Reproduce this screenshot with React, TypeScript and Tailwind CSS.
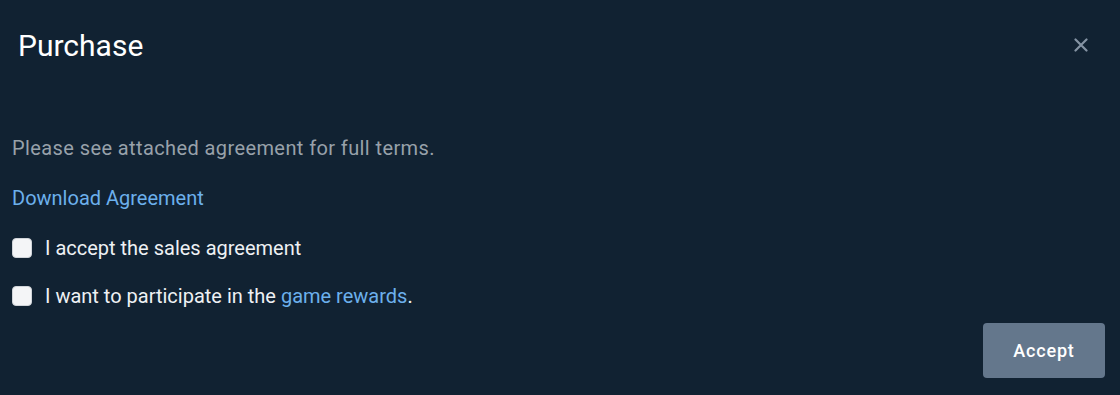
import React from "react";

export default function App() {
  return (
    <div
      className="w-[1120px] h-[395px] bg-[#112232] flex flex-col"
      style={{ fontFamily: "Roboto, 'Noto Sans', sans-serif" }}
    >
      <div className="flex items-start justify-between pl-[18px] pr-[31px] pt-[28px]">
        <h1 className="text-[30px] leading-[36px] text-white font-normal">Purchase</h1>
        <button className="mt-[9px] w-[16px] h-[16px] flex items-center justify-center text-[#8493a3]">
          <svg width="14" height="14" viewBox="0 0 14 14" fill="none">
            <path d="M1.5 1.5L12.5 12.5M12.5 1.5L1.5 12.5" stroke="currentColor" strokeWidth="2.2" strokeLinecap="round" />
          </svg>
        </button>
      </div>
      <div className="pl-[12px] mt-[72px] flex flex-col text-[20px] leading-[24px]">
        <p className="text-[#98a1aa] tracking-[0.4px]">Please see attached agreement for full terms.</p>
        <a className="mt-[26px] text-[#6cb0ec] self-start cursor-pointer">Download Agreement</a>
        <label className="mt-[26px] flex items-center gap-[13px] text-[#eef1f4]">
          <span className="w-[20px] h-[20px] rounded-[4px] bg-[#f4f5f7] border border-[#d0d4d9]" />
          <span>I accept the sales agreement</span>
        </label>
        <label className="mt-[24px] flex items-center gap-[13px] text-[#eef1f4]">
          <span className="w-[20px] h-[20px] rounded-[4px] bg-[#f4f5f7] border border-[#d0d4d9]" />
          <span>
            I want to participate in the <a className="text-[#6cb0ec] cursor-pointer">game rewards</a>.
          </span>
        </label>
      </div>
      <div className="flex justify-end pr-[15px] mt-[15px]">
        <button className="w-[122px] h-[55px] rounded-[4px] bg-[#64778c] text-white text-[18px] font-medium tracking-[0.8px]">
          Accept
        </button>
      </div>
    </div>
  );
}
